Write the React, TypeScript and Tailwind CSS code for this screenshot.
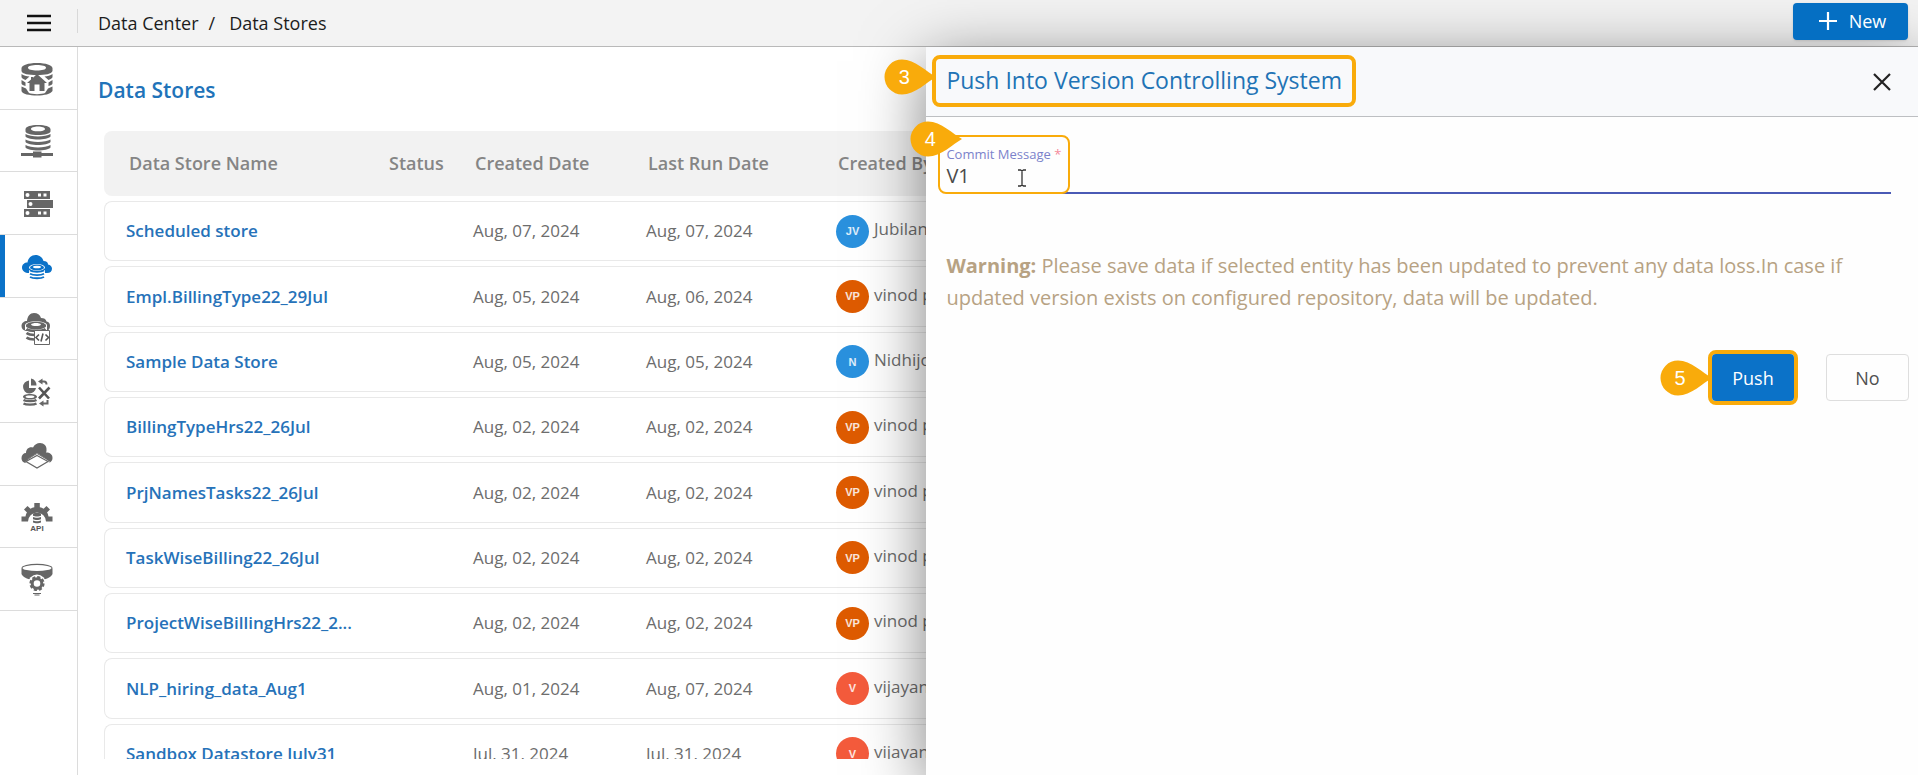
import { ReactNode } from 'react';

const HomeDbIcon = () => (
  <svg viewBox="0 0 32 34" className="h-[34px] w-8" fill="#666">
    <path
      fillRule="evenodd"
      d="M16 1c9 0 15 2.200 15.500 5v3c-1 3-7 4-15.500 4S1 12 .5 9V6C1 3.200 7 1 16 1Zm0 2C11 3 7 4 7 5.700S11 8.500 16 8.500s9-1.100 9-2.800S21 3 16 3Z"
    />
    <path d="M.5 12c2 1.500 5 2.200 8 2.500L4.500 18C2 17 .5 16 .5 15ZM.5 18l4 2.500v3.500c-2-.5-4-1.500-4-2.500ZM.5 24.500l4.500 2 3 4.500c3 1.500 13 1.500 16 0l3-4.500 4.500-2V29c-2 3-8 4.500-15.500 4.500S1 32 .5 29ZM31.500 12c-2 1.500-5 2.200-8 2.500l4 3.500c2.500-1 4-2 4-3ZM31.500 18l-4 2.500v3.500c2-.5 4-1.500 4-2.500Z" />
    <path d="m16 12 10 9h-2.500v8h-5v-6.500h-5V29h-5v-8H6l4-3.500V15h2v.8Z" />
  </svg>
);

const NetworkDbIcon = () => (
  <svg viewBox="0 0 32 34" className="h-[34px] w-8" fill="#666">
    <path
      fillRule="evenodd"
      d="M17 1c7.500 0 12 1.600 12.500 4v2.500C29 9.500 24 11 17 11S5 9.500 4.500 7.500V5C5 2.600 9.500 1 17 1Zm0 1.500c-4 0-7 1-7 2.400s3 2.400 7 2.400 7-1 7-2.400-3-2.400-7-2.400Z"
    />
    <path d="M4.500 10c5 3.200 20 3.200 25 0v2.500c-3 4-22 4-25 0ZM4.500 15.500c5 3.200 20 3.200 25 0V18c-3 4-22 4-25 0ZM4.500 21c5 3.200 20 3.200 25 0v2.500c-3 4-22 4-25 0Z" />
    <path d="M0 29h12v-1.500h8.500V29H32v3H20.500v1.500H12V32H0Z" />
  </svg>
);

const ServerIcon = () => (
  <svg viewBox="0 0 32 32" className="h-8 w-8">
    <path fill="#666" d="M3 3h26v8H3zM6 12h26v8H6zM3 21h26v8H3z" />
    <g fill="#fff">
      <circle cx="6.500" cy="7" r="2" />
      <circle cx="9.500" cy="16" r="2" />
      <circle cx="6.500" cy="25" r="2" />
      <path d="M17 5.500h3v3h-3zM22.500 5.500h3v3h-3zM17 23.500h3v3h-3zM22.500 23.500h3v3h-3z" />
    </g>
  </svg>
);

const CloudStoreIcon = () => (
  <svg viewBox="0 0 32 32" className="h-8 w-8">
    <path
      fill="#0b72c8"
      d="M8 22c-4 0-7-2-7-5.500C1 13.500 3.500 11.500 6.500 11.500 7 7 10.500 4 14.500 4c4 0 7 2.500 8 6 3 0 4.500 1.500 4.500 3.500 2.500.5 4 2 4 4.200 0 2.800-2 4.300-5 4.300Z"
    />
    <ellipse cx="16" cy="16.500" rx="8" ry="3.500" fill="#fff" />
    <ellipse cx="16" cy="16.500" rx="7" ry="3" fill="#0b72c8" />
    <ellipse cx="16" cy="16" rx="4" ry="1.300" fill="#fff" />
    <path d="M8 19v8c3 2 13 2 16 0v-8c-3 2-13 2-16 0Z" fill="#fff" />
    <path
      d="M9 19.500c3 1.800 11 1.800 14 0M9 22.700c3 1.800 11 1.800 14 0M9 25.900c3 1.800 11 1.800 14 0"
      fill="none"
      stroke="#0b72c8"
      strokeWidth="1.800"
    />
  </svg>
);

const CloudCodeIcon = () => (
  <svg viewBox="0 0 32 34" className="h-[34px] w-8">
    <path
      fill="#666"
      d="M5 19c-3-.5-4.500-2.500-4.500-5C.5 11 3 9 6 9c.5-5 3-8 7-8 3.500 0 6 1.500 7 5 3 0 5 1 5.500 3.500 2.500.5 3.500 2 3.500 4.500 0 3-1.500 4.500-4 5Z"
    />
    <path fill="#fff" d="M4 13c2-5 20-5 22 0v5H4Z" />
    <path
      fill="#666"
      fillRule="evenodd"
      d="M5 13c2-4.500 18-4.500 20 0v1.500c-3 4-17 4-20 0Zm5-.5c1 2 9 2 10 0-1-2-9-2-10 0Z"
    />
    <path
      d="M5.500 17c3 2.500 16 2.500 19 0M5.500 21c2 1.500 5 2 8 2M5.500 25.500c2 1.500 5 2 8 2"
      fill="none"
      stroke="#666"
      strokeWidth="2.500"
    />
    <path fill="#fff" stroke="#666" d="M13.500 18.500h15v14h-15z" />
    <path
      d="m18 22.500-3 3 3 3M24.500 22.500l3 3-3 3M22 21.500l-2 8"
      fill="none"
      stroke="#555"
      strokeWidth="1.600"
    />
  </svg>
);

const TransformIcon = () => (
  <svg viewBox="0 0 32 32" className="h-8 w-8" fill="#666">
    <path d="M8 4.500V12h7a6.500 6.500 0 1 1-7-7.500Z" />
    <path d="M10 2.500a6.500 6.500 0 0 1 5.500 7H10Z" />
    <path
      fillRule="evenodd"
      d="M9 18c4.500 0 7 1.200 7 2.800S13.500 23.600 9 23.600s-7-1.200-7-2.800S4.500 18 9 18Zm0 1.500c-2.500 0-4.500.5-4.500 1.300s2 1.300 4.500 1.300 4.500-.5 4.500-1.300-2-1.300-4.500-1.300Z"
    />
    <path
      d="M2.500 24c2.500 1.600 10.500 1.600 13 0M2.500 27.500c2.500 1.600 10.500 1.600 13 0"
      fill="none"
      stroke="#666"
      strokeWidth="2.200"
    />
    <path d="m18 11.500 10 11M28.500 11.500l-10.500 11" stroke="#555" strokeWidth="2.600" />
    <path d="M19.500 5.500h3.500c1.500 0 2.500 1 2.500 3M26.500 24v3.500h-5" fill="none" stroke="#666" strokeWidth="2" />
    <path d="m21.500 2.500-4.500 3 4.500 3ZM18 27.500l4.500-3v6Z" />
  </svg>
);

const CloudLayerIcon = () => (
  <svg viewBox="0 0 32 32" className="h-8 w-8">
    <path
      fill="#666"
      d="M6 24C2.500 24 .5 22 .5 19s2-5 4.500-5c0-4 3-6.500 7-5.500 1.500-3 4-4.500 7-4.500 4 0 7 3 6.500 7 0 1 0 1.500-.5 2.500 4 0 6.500 2 6.500 5.300 0 3.200-2 5.200-5.500 5.200L16 28Z"
    />
    <path fill="#fff" d="M16 14 29 23l-13 8L4 23Z" />
    <path fill="#fff" stroke="#666" strokeWidth="1.200" d="m16 16.500 11 6-11 6.500-11-6.500Z" />
    <path fill="none" stroke="#777" d="m16 14.500 9.500 5.500M16 14.500 6.500 20" />
  </svg>
);

const ApiGearIcon = () => (
  <svg viewBox="0 0 32 32" className="h-8 w-8">
    <path
      fill="#666"
      d="M.5 20.500v-5h4c.2-1.500.8-3 1.500-4L3 8.500 6.500 5l3 2.800c1.200-.8 2.400-1.300 3.800-1.500V2h5.500v4.300c1.400.2 2.600.7 3.800 1.500L25.500 5 29 8.500l-3 3c.7 1 1.300 2.500 1.500 4h4v5H25a9 9 0 1 0-18 0Z"
    />
    <path
      fill="#666"
      d="M12 12.500c2-1 6-1 8 0v2.200c-2 1-6 1-8 0ZM12 16c2 1 6 1 8 0v2.200c-2 1-6 1-8 0ZM12 19.500c2 1 6 1 8 0v2c-2 1-6 1-8 0Z"
    />
    <text
      x="16"
      y="30"
      textAnchor="middle"
      className="font-['Liberation_Sans',sans-serif] text-[8px] font-bold"
      fill="#555"
    >
      API
    </text>
  </svg>
);

const FunnelIcon = () => (
  <svg viewBox="0 0 32 34" className="h-[34px] w-8">
    <path fill="#666" d="M.5 5.500h31V11c-1 3-6 5-10 6h-11c-4-1-9-3-10-6Z" />
    <ellipse cx="16" cy="5" rx="15.500" ry="4.200" fill="#666" />
    <ellipse cx="16" cy="5" rx="14.500" ry="3" fill="#fff" />
    <circle cx="16" cy="20.500" r="9" fill="#fff" />
    <circle cx="16" cy="20.500" r="4.800" fill="none" stroke="#666" strokeWidth="3" />
    <circle
      cx="16"
      cy="20.500"
      r="6.600"
      fill="none"
      stroke="#666"
      strokeWidth="2"
      strokeDasharray="3.200 1.984"
    />
    <path d="M12 30.500h8M13.500 32h5" stroke="#666" strokeWidth="1.200" />
  </svg>
);

const navItems = [
  { label: 'Data Center Home', icon: <HomeDbIcon /> },
  { label: 'Data Connectors', icon: <NetworkDbIcon /> },
  { label: 'Data Sets', icon: <ServerIcon /> },
  { label: 'Data Stores', icon: <CloudStoreIcon />, active: true },
  { label: 'Data Store Metadata', icon: <CloudCodeIcon /> },
  { label: 'Data Preparation', icon: <TransformIcon /> },
  { label: 'Data Sheets', icon: <CloudLayerIcon /> },
  { label: 'Data as API', icon: <ApiGearIcon /> },
  { label: 'Sandbox', icon: <FunnelIcon /> },
];

const stores = [
  { name: 'Scheduled store', created: 'Aug, 07, 2024', lastRun: 'Aug, 07, 2024', initials: 'JV', by: 'Jubilant V', color: 'bg-[#2a91de]' },
  { name: 'Empl.BillingType22_29Jul', created: 'Aug, 05, 2024', lastRun: 'Aug, 06, 2024', initials: 'VP', by: 'vinod p', color: 'bg-[#de5b00]' },
  { name: 'Sample Data Store', created: 'Aug, 05, 2024', lastRun: 'Aug, 05, 2024', initials: 'N', by: 'Nidhijo', color: 'bg-[#2a91de]' },
  { name: 'BillingTypeHrs22_26Jul', created: 'Aug, 02, 2024', lastRun: 'Aug, 02, 2024', initials: 'VP', by: 'vinod p', color: 'bg-[#de5b00]' },
  { name: 'PrjNamesTasks22_26Jul', created: 'Aug, 02, 2024', lastRun: 'Aug, 02, 2024', initials: 'VP', by: 'vinod p', color: 'bg-[#de5b00]' },
  { name: 'TaskWiseBilling22_26Jul', created: 'Aug, 02, 2024', lastRun: 'Aug, 02, 2024', initials: 'VP', by: 'vinod p', color: 'bg-[#de5b00]' },
  { name: 'ProjectWiseBillingHrs22_2...', created: 'Aug, 02, 2024', lastRun: 'Aug, 02, 2024', initials: 'VP', by: 'vinod p', color: 'bg-[#de5b00]' },
  { name: 'NLP_hiring_data_Aug1', created: 'Aug, 01, 2024', lastRun: 'Aug, 07, 2024', initials: 'V', by: 'vijayan', color: 'bg-[#f45b3c]' },
  { name: 'Sandbox Datastore July31', created: 'Jul, 31, 2024', lastRun: 'Jul, 31, 2024', initials: 'V', by: 'vijayan', color: 'bg-[#f45b3c]' },
];

const Pin = ({ className, children }: { className: string; children: ReactNode }) => (
  <span
    className={`absolute flex h-9 w-[52px] items-center font-['Liberation_Sans',sans-serif] text-xl text-white ${className}`}
  >
    <svg viewBox="0 0 52 36" className="absolute inset-0" fill="#f9ab0b">
      <path d="M52 18C43 13 31 .5 18 .5a17.500 17.500 0 0 0 0 35C31 35.500 43 23 52 18Z" />
    </svg>
    <span className="relative w-10 text-center">{children}</span>
  </span>
);

const TopBar = () => (
  <header className="flex h-[47px] shrink-0 items-center border-b border-[#b9b9b9] bg-[#f3f3f3] text-lg text-[#1c1c1c]">
    <button type="button" aria-label="Menu" className="flex w-[77px] justify-center">
      <svg viewBox="0 0 24 18" className="h-[18px] w-6" stroke="#111" strokeWidth="2.400">
        <path d="M0 2h24M0 9h24M0 16h24" />
      </svg>
    </button>
    <div className="mb-1 h-6 w-px bg-[#d8d8d8]" />
    <nav aria-label="Breadcrumb" className="flex gap-2.5 pl-5">
      <a href="#center">Data Center</a>
      <span>/</span>
      <a href="#stores" className="pl-1">
        Data Stores
      </a>
    </nav>
    <button
      type="button"
      className="relative z-20 mr-2.5 mb-1 ml-auto flex h-[37px] w-[115px] items-center justify-center gap-3 rounded bg-[#056fc3] pl-1 text-lg text-white shadow"
    >
      <svg viewBox="0 0 18 18" className="h-[18px] w-[18px]" stroke="#fff" strokeWidth="2.200">
        <path d="M9 0v18M0 9h18" />
      </svg>
      New
    </button>
  </header>
);

const Sidebar = () => (
  <aside className="w-[78px] shrink-0 border-r border-[#dcdcdc]">
    <nav className="grid h-[564px] grid-rows-9">
      {navItems.map((item) => (
        <a
          key={item.label}
          href="#nav"
          aria-label={item.label}
          className="flex items-center border-b border-[#dcdcdc]"
        >
          <span className={`w-[5px] self-stretch ${item.active ? 'bg-[#0b72c8]' : ''}`} />
          <span className="flex flex-1 justify-center pt-0.5 pr-2">{item.icon}</span>
        </a>
      ))}
    </nav>
  </aside>
);

const StoreTable = () => (
  <table className="h-[663px] w-full table-fixed border-separate border-spacing-x-0 border-spacing-y-[5px] text-left text-[17px] whitespace-nowrap text-[#6d6d6d]">
    <colgroup>
      <col className="w-[261px]" />
      <col className="w-[86px]" />
      <col className="w-[173px]" />
      <col className="w-[190px]" />
      <col />
    </colgroup>
    <thead>
      <tr className="h-[65px] text-lg text-[#858585]">
        <th className="rounded-l-lg bg-[#f2f2f2] pb-0.5 pl-[25px] font-semibold">Data Store Name</th>
        <th className="bg-[#f2f2f2] pb-0.5 pl-6 font-semibold">Status</th>
        <th className="bg-[#f2f2f2] pb-0.5 pl-6 font-semibold">Created Date</th>
        <th className="bg-[#f2f2f2] pb-0.5 pl-6 font-semibold">Last Run Date</th>
        <th className="rounded-r-lg bg-[#f2f2f2] pb-0.5 pl-6 font-semibold">Created By</th>
      </tr>
    </thead>
    <tbody>
      {stores.map((store) => (
        <tr key={store.name}>
          <td className="rounded-l-lg border-y border-l border-[#e9e9e9] pl-[21px] font-semibold text-[#2672b9]">
            <a href="#store">{store.name}</a>
          </td>
          <td className="border-y border-[#e9e9e9]" />
          <td className="border-y border-[#e9e9e9] pl-[22px]">{store.created}</td>
          <td className="border-y border-[#e9e9e9] pl-[22px]">{store.lastRun}</td>
          <td className="rounded-r-lg border-y border-r border-[#e9e9e9] pl-[22px]">
            <div className="flex items-center gap-[5px]">
              <span
                className={`flex h-[33px] w-[33px] items-center justify-center rounded-full font-['Liberation_Sans',sans-serif] text-[11px] font-bold text-white/85 ${store.color}`}
              >
                {store.initials}
              </span>
              <span className="pb-1">{store.by}</span>
            </div>
          </td>
        </tr>
      ))}
    </tbody>
  </table>
);

const PushDrawer = () => (
  <section
    role="dialog"
    aria-labelledby="push-title"
    className="absolute top-[47px] right-0 bottom-0 z-10 w-[51.7%] bg-[#fefefe] shadow-[0_14px_60px_rgba(0,0,0,0.5)]"
  >
    <div className="flex h-[70px] items-center justify-between border-b border-[#bdbfc2] bg-[#f8f9fb] pr-[27px] pl-1.5">
      <div className="relative mb-0.5 flex h-[52px] items-center rounded-lg border-4 border-[#f9ab0b] px-2.5">
        <h2 id="push-title" className="text-[23px] text-[#2173b5]">
          Push Into Version Controlling System
        </h2>
        <Pin className="-left-[52px] top-0">3</Pin>
      </div>
      <button type="button" aria-label="Close">
        <svg viewBox="0 0 18 18" className="h-[18px] w-[18px]" stroke="#222" strokeWidth="2.200">
          <path d="m1 1 16 16M17 1 1 17" />
        </svg>
      </button>
    </div>
    <form className="pt-7 pr-[27px] pl-5">
      <div className="relative border-b-2 border-[#4a5ab5]">
        <label htmlFor="commit" className="block text-[13px] leading-[18px] text-[#7b82cb]">
          Commit Message <span className="text-[#f58a9b]">*</span>
        </label>
        <input
          id="commit"
          type="text"
          defaultValue="V1"
          className="block h-[29px] w-full bg-transparent pb-1 text-xl text-[#4a4a4a] outline-none"
        />
        <div className="absolute -top-2.5 -left-2 h-[59px] w-[132px] rounded-lg border-2 border-[#f9ab0b]" />
        <Pin className="-top-6 -left-9">4</Pin>
        <svg
          viewBox="0 0 8 18"
          className="absolute top-6 left-[72px] h-[18px] w-2"
          fill="none"
          stroke="#333"
          strokeWidth="1.300"
        >
          <path d="M0 1h2.500L4 2 5.500 1H8M4 2v14M0 17h2.500L4 16l1.500 1H8" />
        </svg>
      </div>
      <p className="pt-14 text-xl leading-8 text-[#b7a283]">
        <strong className="font-bold">Warning:</strong> Please save data if selected entity has been
        updated to prevent any data loss.In case if updated version exists on configured repository,
        data will be updated.
      </p>
    </form>
    <div className="flex items-center justify-end gap-7 pt-9 pr-[9px] text-lg">
      <div className="relative rounded-lg border-4 border-[#f9ab0b]">
        <button type="button" className="block h-[47px] w-[82px] rounded bg-[#0b72c8] text-white">
          Push
        </button>
        <Pin className="-left-[52px] top-1.5">5</Pin>
      </div>
      <button
        type="button"
        className="h-[47px] w-[83px] rounded border border-[#dedede] text-[#505050]"
      >
        No
      </button>
    </div>
  </section>
);

export default function App() {
  return (
    <div className="relative flex h-screen flex-col overflow-hidden bg-white font-['Open_Sans',sans-serif]">
      <TopBar />
      <div className="flex min-h-0 flex-1">
        <Sidebar />
        <main className="flex min-w-0 flex-1 flex-col pb-4 pl-5">
          <h1 className="pt-7 pb-[21px] text-[21px] leading-[30px] font-semibold text-[#2173b9]">
            Data Stores
          </h1>
          <div className="min-h-0 flex-1 overflow-hidden pr-4 pl-1.5">
            <StoreTable />
          </div>
        </main>
      </div>
      <PushDrawer />
    </div>
  );
}
